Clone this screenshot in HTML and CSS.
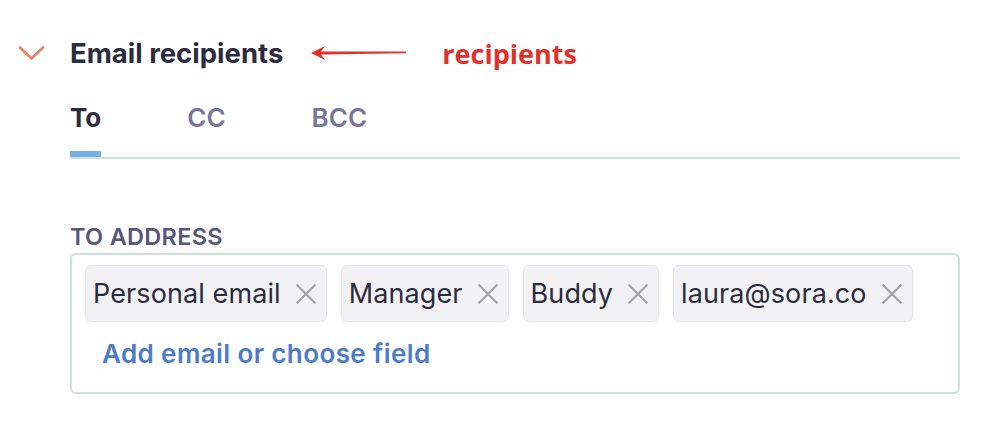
FILE: index.html
```html
<!DOCTYPE html>
<html lang="en">
<head>
    <meta charset="UTF-8">
    <title>Email recipients</title>
    <link rel="stylesheet" href="styles.css">
</head>
<body>
    <div class="header">
        <svg class="chevron" width="27" height="16" viewBox="0 0 27 16">
            <polyline points="2,2.5 13.5,13.5 25,2.5" fill="none" stroke="#e98462" stroke-width="2.8" stroke-linecap="round" stroke-linejoin="round"/>
        </svg>
        <h2 class="title">Email recipients</h2>
        <svg class="note-arrow" width="96" height="14" viewBox="0 0 96 14">
            <polygon points="0,7 14,0 10,5.5 95,5.6 95,7.2 10,8.5 14,14" fill="#e2302a"/>
        </svg>
        <span class="note">recipients</span>
    </div>

    <div class="content">
        <div class="tabs">
            <div class="tab active">To</div>
            <div class="tab">CC</div>
            <div class="tab">BCC</div>
        </div>

        <div class="label">TO ADDRESS</div>
        <div class="address-box">
            <div class="chips">
                <div class="chip">Personal email <span class="remove"><svg width="22" height="22" viewBox="0 0 22 22"><path d="M1.5 1.5L20.5 20.5M20.5 1.5L1.5 20.5" stroke="#a3a3a7" stroke-width="2.2"/></svg></span></div>
                <div class="chip">Manager <span class="remove"><svg width="22" height="22" viewBox="0 0 22 22"><path d="M1.5 1.5L20.5 20.5M20.5 1.5L1.5 20.5" stroke="#a3a3a7" stroke-width="2.2"/></svg></span></div>
                <div class="chip">Buddy <span class="remove"><svg width="22" height="22" viewBox="0 0 22 22"><path d="M1.5 1.5L20.5 20.5M20.5 1.5L1.5 20.5" stroke="#a3a3a7" stroke-width="2.2"/></svg></span></div>
                <div class="chip">laura@sora.co <span class="remove"><svg width="22" height="22" viewBox="0 0 22 22"><path d="M1.5 1.5L20.5 20.5M20.5 1.5L1.5 20.5" stroke="#a3a3a7" stroke-width="2.2"/></svg></span></div>
            </div>
            <a class="add-link" href="#">Add email or choose field</a>
        </div>
    </div>
</body>
</html>
```

FILE: styles.css
```css
body {
    margin: 0;
    padding: 0;
    background: #fff;
    font-family: 'Inter', 'Noto Sans', sans-serif;
    color: #2c2c40;
}
.header {
    display: flex;
    align-items: center;
    height: 34px;
    margin-top: 36px;
    padding-left: 18px;
}
.chevron {
    margin-right: 25px;
}
.title {
    margin: 0;
    font-size: 27.5px;
    font-weight: 700;
    color: #2c2c40;
}
.note-arrow {
    margin-left: 28px;
}
.note {
    margin-left: 35px;
    font-family: 'Open Sans', sans-serif;
    font-weight: 700;
    font-size: 27px;
    color: #e2302a;
}
.content {
    margin-left: 70px;
    width: 890px;
}
.tabs {
    display: flex;
    gap: 86px;
    margin-top: 33px;
    border-bottom: 2px solid #d4dede;
}
.tab {
    font-size: 26px;
    font-weight: 600;
    line-height: 30px;
    padding-bottom: 18px;
    border-bottom: 6px solid transparent;
    color: #76769a;
}
.tab.active {
    color: #2c2c40;
    font-weight: 700;
    border-bottom-color: #74b1e4;
}
.label {
    margin-top: 63px;
    font-size: 23.5px;
    font-weight: 600;
    letter-spacing: 0.3px;
    color: #56567c;
}
.address-box {
    margin-top: 2px;
    border: 2px solid #d4dede;
    border-radius: 6px;
    padding: 10px 13px 23px;
}
.chips {
    display: flex;
    flex-wrap: wrap;
    gap: 14px;
}
.chip {
    display: flex;
    align-items: center;
    gap: 14px;
    height: 55px;
    padding: 0 9px 0 7px;
    background: #f2f2f5;
    border: 1px solid #e4e4ea;
    border-radius: 6px;
    font-size: 27px;
    letter-spacing: 0.1px;
    color: #2c2c40;
}
.remove {
    display: flex;
}
.add-link {
    display: inline-block;
    margin-top: 16px;
    margin-left: 17px;
    font-size: 26px;
    font-weight: 600;
    letter-spacing: 0.4px;
    color: #4d7bc9;
    text-decoration: none;
}
```
